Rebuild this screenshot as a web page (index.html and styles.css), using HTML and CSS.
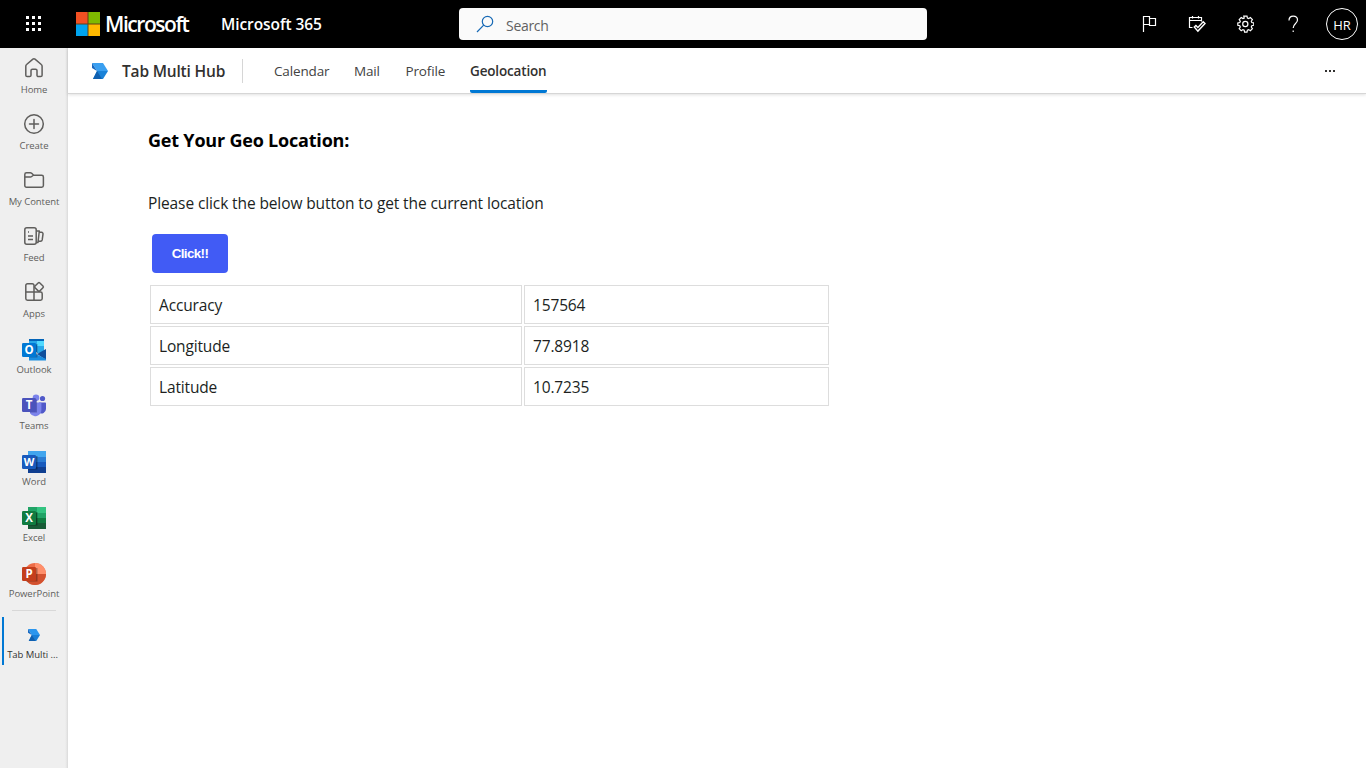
FILE: index.html
```html
<!DOCTYPE html>
<html lang="en">
<head>
<meta charset="utf-8">
<title>Tab Multi Hub</title>
<link rel="stylesheet" href="styles.css">
</head>
<body>
<header class="topbar">
  <svg class="waffle" width="16" height="16" viewBox="0 0 16 16" fill="#fff"><path d="M0 0h3v3H0zM6 0h3v3H6zM12 0h3v3h-3zM0 6h3v3H0zM6 6h3v3H6zM12 6h3v3h-3zM0 12h3v3H0zM6 12h3v3H6zM12 12h3v3h-3z"/></svg>
  <svg class="squares" width="24" height="24" viewBox="0 0 24 24"><path fill="#614116" d="M0 0h24v24H0z"/><path fill="#f25022" d="M0 0h11.500v11.500H0z"/><path fill="#7fba00" d="M12.500 0H24v11.500H12.500z"/><path fill="#00a4ef" d="M0 12.500h11.500V24H0z"/><path fill="#ffb900" d="M12.500 12.500H24V24H12.500z"/></svg>
  <span class="brand">Microsoft</span>
  <span class="suite">Microsoft 365</span>
  <div class="search">
    <svg width="18" height="18" viewBox="0 0 18 18" fill="none" stroke="#1769b5" stroke-width="1.200"><circle cx="11.500" cy="6.500" r="5.200"/><path d="M7.700 10.200 1 17"/></svg>
    <span class="search-text">Search</span>
  </div>
  <div class="actions">
    <svg width="18" height="18" viewBox="0 0 18 18" fill="none" stroke="#fff" stroke-width="1.200"><path d="M3.500 17V1.500h6v8h-6M9.500 3.500h6v7h-6v-1"/></svg>
    <svg width="18" height="18" viewBox="0 0 18 18" fill="none" stroke="#fff" stroke-width="1.200"><path d="M13.500 6.500v-4h-12v10h3M1.500 5.500h12M4.500 1v2.500M10.500 1v2.500"/><path d="m6.300 12 1.600-1.600 2 2 5.300-5.600 1.800 1.800-7.100 7.500z" stroke-width="1.400"/></svg>
    <svg width="18" height="18" viewBox="0 0 18 18" fill="none" stroke="#fff" stroke-width="1.200"><path d="m7.500 1.500.4 2-1.300.5-1.700-1.100-2 2L4 6.600l-.5 1.300-2 .4v2.400l2 .4.500 1.300-1.100 1.700 2 2 1.700-1.100 1.300.5.4 2h2.400l.4-2 1.300-.5 1.700 1.100 2-2-1.100-1.700.5-1.300 2-.4V8.300l-2-.4-.5-1.300 1.100-1.700-2-2L12.400 4l-1.300-.5-.4-2z" transform="translate(.3 -.4)"/><circle cx="9.300" cy="9" r="2.600"/></svg>
    <svg width="18" height="18" viewBox="0 0 18 18" fill="none" stroke="#fff" stroke-width="1.200"><path d="M5 5.500c0-2.600 1.700-4.300 4.200-4.300s4.300 1.500 4.300 3.900C13.500 8.500 9.200 8.500 9.200 13M9.200 15.500v1.500"/></svg>
  </div>
  <div class="avatar"><span>HR</span></div>
</header>
<div class="shell">
  <nav class="rail">
    <a class="item"><svg width="24" height="24" viewBox="0 0 24 24" fill="none" stroke="#5f5e5c" stroke-width="1.500" stroke-linejoin="round"><path d="M3.800 10.200c0-.7.300-1.300.8-1.700l6.300-5.400c.6-.5 1.500-.5 2.100 0l6.300 5.400c.5.400.8 1 .8 1.700v9c0 .8-.6 1.400-1.400 1.400h-2.300c-.8 0-1.400-.6-1.400-1.400v-4.600c0-.8-.6-1.400-1.400-1.400h-3.200c-.8 0-1.400.6-1.400 1.400v4.600c0 .8-.6 1.400-1.400 1.400H5.200c-.8 0-1.400-.6-1.400-1.400z"/></svg><span>Home</span></a>
    <a class="item"><svg width="24" height="24" viewBox="0 0 24 24" fill="none" stroke="#5f5e5c" stroke-width="1.500" stroke-linecap="round"><circle cx="12" cy="12" r="9.300"/><path d="M12 7.500v9M7.500 12h9"/></svg><span>Create</span></a>
    <a class="item"><svg width="24" height="24" viewBox="0 0 24 24" fill="none" stroke="#5f5e5c" stroke-width="1.500" stroke-linejoin="round"><path d="M2.800 6.500c0-1 .8-1.700 1.700-1.700h4c.5 0 .8.200 1.200.5l2 1.900h8c1 0 1.700.8 1.700 1.700v8.600c0 1-.7 1.700-1.700 1.700H4.500c-1 0-1.700-.7-1.700-1.700zM2.800 9h5.700c.5 0 .8-.2 1.200-.5l2-1.500"/></svg><span>My Content</span></a>
    <a class="item"><svg width="24" height="24" viewBox="0 0 24 24" fill="none" stroke="#5f5e5c" stroke-width="1.500" stroke-linejoin="round"><rect x="2.800" y="3.700" width="11.400" height="16.600" rx="2"/><path d="M6 8h1M6 12h5M6 15.500h5M14.500 7h2.800l-1.300 11.500h-1.800M17.500 8l2 .2c1 .1 1.600 1 1.500 1.900l-.8 5.800c-.2 1-1.100 1.500-2 1.400h-1.800"/></svg><span>Feed</span></a>
    <a class="item"><svg width="24" height="24" viewBox="0 0 24 24" fill="none" stroke="#5f5e5c" stroke-width="1.500" stroke-linejoin="round"><path d="M12 12V5.500c0-1-.7-1.700-1.700-1.700H5.500c-1 0-1.700.7-1.700 1.700v13c0 1 .7 1.700 1.700 1.700h13c1 0 1.700-.7 1.700-1.700v-4.800c0-1-.7-1.700-1.700-1.700H3.800M12 12v8.200"/><rect x="13.600" y="3.500" width="6.800" height="6.800" rx="1.200" transform="rotate(45 17 6.900)" fill="#efefef"/></svg><span>Apps</span></a>
    <a class="item product"><svg width="24" height="24" viewBox="0 0 24 24"><path fill="#0364b8" d="M7 1h15v3H7z"/><path fill="#28a8ea" d="M7 3h8v5H7z"/><path fill="#0078d4" d="M7 7h8v7H7z"/><path fill="#50d9ff" d="M15 3h7v5h-7z"/><path fill="#28a8ea" d="M15 8h7v7h-7z"/><path fill="#0f4f9c" d="m15 16 9-5v11z"/><path fill="#1b8ee0" d="m15 16.500 9 4.500v1.500H7V13z"/><path fill="#123b6d" opacity=".45" d="M7 6h8.500v13.500H7z"/><rect y="5" width="14" height="14" rx="1.200" fill="#0078d4"/><text class="letter" x="7" y="16.200">O</text></svg><span>Outlook</span></a>
    <a class="item product"><svg width="24" height="24" viewBox="0 0 24 24"><circle cx="20.500" cy="4.500" r="2.600" fill="#5059c9"/><circle cx="14" cy="3.800" r="3.300" fill="#7b83eb"/><path fill="#5059c9" d="M17 8.500h6c.6 0 1 .4 1 1V15a4.500 4.500 0 0 1-7 3.700z"/><path fill="#7b83eb" d="M8 8.500h10.400c.6 0 1 .4 1 1V16a6.200 6.200 0 0 1-11.400 3.300z"/><path fill="#40459b" opacity=".6" d="M7 5.500h8v13H8z"/><rect y="4" width="14" height="14" rx="1.200" fill="#4b53bc"/><text class="letter" x="7" y="15.300">T</text></svg><span>Teams</span></a>
    <a class="item product"><svg width="24" height="24" viewBox="0 0 24 24"><path fill="#41a5ee" d="M6 1h18v6H6z"/><path fill="#2b7cd3" d="M6 7h18v5H6z"/><path fill="#185abd" d="M6 12h18v5H6z"/><path fill="#103f91" d="M6 17h18v6H6z"/><path opacity=".35" d="M6 6h9.500v13.500H6z"/><rect y="5" width="14" height="14" rx="1.200" fill="#185abd"/><text class="letter w" x="7" y="16">W</text></svg><span>Word</span></a>
    <a class="item product"><svg width="24" height="24" viewBox="0 0 24 24"><path fill="#21a366" d="M6 1h9v6H6z"/><path fill="#33c481" d="M15 1h9v6h-9z"/><path fill="#107c41" d="M6 7h9v5H6zM15 12h9v5h-9z"/><path fill="#21a366" d="M15 7h9v5h-9z"/><path fill="#185c37" d="M6 12h9v5h9v6H6z"/><path opacity=".35" d="M6 6h9.500v13.500H6z"/><rect y="5" width="14" height="14" rx="1.200" fill="#107c41"/><text class="letter" x="7" y="16.200">X</text></svg><span>Excel</span></a>
    <a class="item product"><svg width="24" height="24" viewBox="0 0 24 24"><circle cx="13" cy="12" r="11" fill="#ed6c47"/><path fill="#ff8f6b" d="M13 1a11 11 0 0 1 11 11H13z"/><path fill="#d35230" d="M2 12h22a11 11 0 0 1-22 0z"/><path opacity=".3" d="M4 6h11.500v13.500H4z"/><rect y="5" width="14" height="14" rx="1.200" fill="#c43e1c"/><text class="letter" x="7" y="16.200">P</text></svg><span>PowerPoint</span></a>
    <div class="rule"></div>
    <a class="item current"><svg width="12" height="12" viewBox="0 0 16 16"><path fill="#2b96ee" d="M0 0h11l5 8H5z"/><path fill="#1567c0" d="M0 0l5 8-5-3z"/><path fill="#1a7ed6" d="M5 8h11l-5 8H1z"/><path fill="#1060b0" d="M5 8l5 8H1z"/></svg><span>Tab Multi ...</span></a>
  </nav>
  <div class="main">
    <div class="tabs">
      <svg class="app-icon" width="16" height="16" viewBox="0 0 16 16"><path fill="#3a9ff0" d="M0 0h11l5 8H5z"/><path fill="#1567c0" d="M0 0l5 8-5-3z"/><path fill="#1a82d8" d="M5 8h11l-5 8H1z"/><path fill="#1060b0" d="M5 8l5 8H1z"/></svg>
      <span class="app-name">Tab Multi Hub</span>
      <span class="divider"></span>
      <a class="tab calendar">Calendar</a>
      <a class="tab mail">Mail</a>
      <a class="tab profile">Profile</a>
      <a class="tab selected">Geolocation</a>
      <svg class="more" width="12" height="4" viewBox="0 0 12 4" fill="#323130"><path d="M1 1h2v2H1zM5 1h2v2H5zM9 1h2v2H9z"/></svg>
    </div>
    <main class="content">
      <h1 class="heading">Get Your Geo Location:</h1>
      <p class="hint">Please click the below button to get the current location</p>
      <button class="button">Click!!</button>
      <div class="grid">
        <div class="cell">Accuracy</div><div class="cell num">157564</div>
        <div class="cell">Longitude</div><div class="cell num">77.8918</div>
        <div class="cell">Latitude</div><div class="cell num">10.7235</div>
      </div>
    </main>
  </div>
</div>
</body>
</html>
```
FILE: styles.css
```css
* { box-sizing: border-box; }
body { margin: 0; height: 768px; overflow: hidden; background: #fff; font-family: "Open Sans", "Noto Sans", sans-serif; display: flex; flex-direction: column; white-space: nowrap; }
svg { flex: none; display: block; }
.topbar { height: 48px; flex: none; background: #000; color: #fff; display: flex; align-items: center; }
.waffle { margin-left: 26px; }
.squares { margin-left: 34px; }
.brand { width: 116px; margin-left: 5px; font-size: 21px; font-weight: 600; letter-spacing: -1.45px; line-height: 28px; }
.suite { width: 238px; font-size: 15.500px; font-weight: 600; letter-spacing: -0.08px; line-height: 24px; }
.search { width: 468px; height: 32px; background: #fafafa; border-radius: 4px; display: flex; align-items: center; color: #616161; font-size: 14px; }
.search svg { margin-left: 17px; }
.search-text { margin-left: 12px; padding-top: 2px; letter-spacing: -0.3px; }
.actions { display: flex; gap: 30px; margin-left: 213px; }
.avatar { width: 32px; height: 32px; margin-left: 24px; border: 1px solid #fff; border-radius: 50%; display: flex; align-items: center; justify-content: center; font-size: 13px; padding-top: 1px; }
.shell { flex: 1; display: flex; min-height: 0; }
.rail { width: 68px; flex: none; background: linear-gradient(90deg, #efefef 65px, #e4e4e4 67px, #d8d8d8 68px); }
.item { height: 56px; padding-top: 8px; display: flex; flex-direction: column; align-items: center; color: #605e5c; font-size: 9.500px; letter-spacing: -0.05px; line-height: 14px; }
.item span { margin-top: 3px; }
.product { padding-top: 10px; }
.product span { margin-top: 1px; }
.letter { font: 700 11.500px "Open Sans", sans-serif; fill: #fff; text-anchor: middle; }
.letter.w { font-size: 11px; }
.rule { height: 1px; margin: 2px 12px 0; background: #d8d8d8; }
.current { height: 48px; margin: 6px 7px 0 2px; border-left: 2px solid #0078d4; padding-top: 12px; color: #323130; }
.current svg { margin-left: 2px; }
.current span { margin-top: 7px; }
.main { flex: 1; }
.tabs { height: 46px; border-bottom: 1px solid #d6d6d6; box-shadow: 0 1px 3px rgba(0,0,0,.12); display: flex; align-items: center; color: #424242; font-size: 13.500px; }
.app-icon { margin-left: 24px; }
.app-name { width: 120px; margin-left: 14px; font-size: 15.500px; font-weight: 600; color: #323130; letter-spacing: -0.18px; padding-top: 1px; }
.divider { width: 1px; height: 24px; background: #d6d6d6; margin-right: 31px; }
.tab { height: 45px; line-height: 47px; letter-spacing: -0.15px; }
.calendar { width: 80px; }
.mail { width: 51.500px; }
.profile { width: 64.500px; }
.selected { width: 77px; font-weight: 600; color: #323130; letter-spacing: -0.16px; border-bottom: 3px solid #0078d4; border-radius: 2px; }
.more { margin-left: 777px; }
.content { padding: 34px 0 0 80px; color: #000; }
.heading { margin: 0; font-size: 18px; line-height: 24px; font-weight: 700; letter-spacing: -0.2px; }
.hint { margin: 39px 0 0; font-size: 15.500px; line-height: 24px; letter-spacing: -0.11px; color: #201f1e; }
.button { display: block; width: 76px; height: 39px; margin: 19px 0 0 4px; padding: 0; border: 0; border-radius: 4px; background: #415bf5; color: #fff; font: 700 13.333px "Liberation Sans", sans-serif; letter-spacing: -0.6px; }
.grid { display: grid; grid-template-columns: 372px 305px; gap: 2px; margin: 12px 0 0 2px; }
.cell { height: 39px; border: 1px solid #ddd; padding: 1px 8px 0; line-height: 37px; font-size: 15.500px; letter-spacing: -0.15px; color: #201f1e; }
```
